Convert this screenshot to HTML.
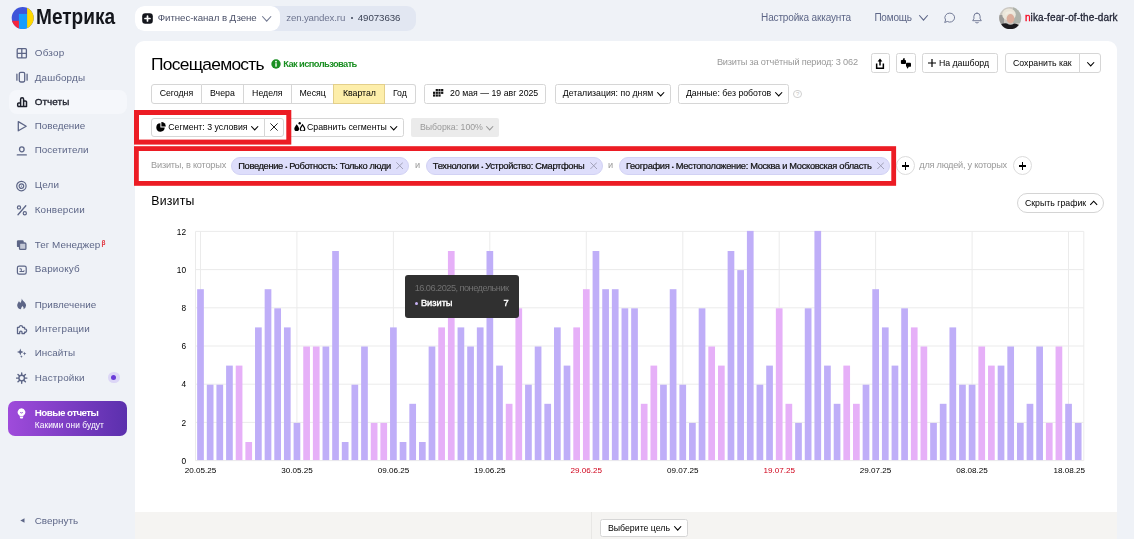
<!DOCTYPE html>
<html lang="ru"><head><meta charset="utf-8"><title>Метрика — Посещаемость</title>
<style>
*{box-sizing:border-box;margin:0;padding:0}
html,body{width:1134px;height:539px;overflow:hidden}
body{background:#eff2f7;font-family:"Liberation Sans",Arial,sans-serif;position:relative;color:#000;font-size:8.67px}
.abs{position:absolute}
.t{position:absolute;white-space:nowrap}
.d{font-size:6px;position:relative;top:-0.500px}
.btn{position:absolute;border:1px solid #d6d6d6;border-radius:2.500px;background:#fff}
.bt{position:absolute;white-space:nowrap;font-size:8.67px;line-height:9px;color:#000}
.seg{position:absolute;top:84px;height:19.500px;border:1px solid #d6d6d6;border-left:none;background:#fff;line-height:17.500px;font-size:8.67px;text-align:center}
.chip{position:absolute;top:157px;height:18px;border-radius:9px;background:#dedefb;border:1px solid #d2d2f4}
.plus{position:absolute;width:19px;height:19px;border-radius:50%;border:1px solid #dcdcdc;background:#fff}
.plus:before{content:"";position:absolute;left:4.700px;top:7.800px;width:7.600px;height:1.400px;background:#000}
.plus:after{content:"";position:absolute;left:7.800px;top:4.700px;width:1.400px;height:7.600px;background:#000}
</style></head><body>

<!-- logo -->
<svg class="abs" style="left:11px;top:6px" width="24" height="24" viewBox="0 0 24 24">
 <defs><clipPath id="lg"><circle cx="11.700" cy="12" r="11"/></clipPath></defs>
 <g clip-path="url(#lg)">
  <rect x="0" y="0" width="24" height="24" fill="#3f54d9"/>
  <rect x="0" y="14.800" width="8" height="10" fill="#f5263d"/>
  <rect x="7.900" y="7.900" width="8.300" height="17" fill="#179cfd"/>
  <rect x="16.100" y="0" width="8" height="24" fill="#ffd800"/>
 </g>
</svg>

<!-- counter selector -->
<div class="abs" style="left:135px;top:6px;width:281px;height:24.500px;border-radius:9px;background:#e2e7f2"></div>
<div class="abs" style="left:135px;top:6px;width:144.500px;height:24.500px;border-radius:9px;background:#fff"></div>
<svg class="abs" style="left:141.500px;top:12.500px" width="11" height="11" viewBox="0 0 11 11"><rect x="0.200" y="0.200" width="10.600" height="10.600" rx="3" fill="#14161c"/><path d="M5.500 3v5M3 5.500h5" stroke="#fff" stroke-width="1.700" stroke-linecap="round"/></svg>
<svg class="abs" style="left:262.4px;top:15.6px;overflow:visible" width="9.4" height="5.4" viewBox="0 0 9.4 5.4"><path d="M0.25 0.25L4.70 5.15L9.15 0.25" fill="none" stroke="#727991" stroke-width="1.1"/></svg>
<div class="abs" style="left:350.600px;top:17px;width:2px;height:2px;border-radius:50%;background:#3d4457"></div>

<svg class="abs" style="left:918.5px;top:15.3px;overflow:visible" width="9" height="5.3" viewBox="0 0 9 5.3"><path d="M0.25 0.25L4.50 5.05L8.75 0.25" fill="none" stroke="#5d6687" stroke-width="1.1"/></svg>
<svg class="abs" style="left:943px;top:12px" width="13" height="12" viewBox="0 0 13 12"><path d="M6.800 1.100a4.800 4.500 0 1 1-2.500 8.350L1.700 10.500L2.600 8A4.800 4.500 0 0 1 6.800 1.100Z" fill="none" stroke="#747c98" stroke-width="1" stroke-linejoin="round"/></svg>
<svg class="abs" style="left:970.500px;top:12px" width="12" height="12" viewBox="0 0 12 12"><path d="M6 1.100a3.100 3.100 0 0 1 3.100 3.100v2.500l1.200 2H1.700l1.200-2V4.200A3.100 3.100 0 0 1 6 1.100ZM4.700 10.600q1.300 1 2.600 0" fill="none" stroke="#747c98" stroke-width="1" stroke-linejoin="round" stroke-linecap="round"/></svg>
<svg class="abs" style="left:999px;top:7px" width="22.500" height="22.500" viewBox="0 0 22.500 22.500">
 <defs><clipPath id="av"><circle cx="11.200" cy="11.100" r="11"/></clipPath></defs>
 <g clip-path="url(#av)">
  <rect width="23" height="23" fill="#cbc8c2"/>
  <rect x="14" y="0" width="9" height="16" fill="#aeb3ab"/>
  <rect x="0" y="8" width="5" height="9" fill="#9a9a98"/>
  <ellipse cx="10" cy="7.500" rx="6.800" ry="6" fill="#ebe6da"/>
  <ellipse cx="11.500" cy="11.800" rx="3.900" ry="4.700" fill="#dcae9c"/>
  <path d="M6.500 9q2-4 8.500-2.500q-3-4-8.500-1Z" fill="#f1ede2"/>
  <path d="M0 23V18.500q4.500-3 8-2q3.500 2.500 7 0q4 0 8 3.500V23Z" fill="#1b1a1e"/>
 </g>
</svg>

<!-- sidebar -->
<svg class="abs" style="left:16px;top:47.2px" width="12" height="12" viewBox="0 0 12 12"><rect x="1.2" y="1.7" width="9.2" height="9.2" rx="1" fill="none" stroke="#5d6687" stroke-width="1.3"/><path d="M5.8 1.7v9.2M1.2 6.3h9.2" stroke="#5d6687" stroke-width="1.3"/></svg>
<svg class="abs" style="left:16px;top:71.3px" width="12" height="12" viewBox="0 0 12 12"><rect x="3.3" y="1.4" width="5.4" height="9.6" rx="1.4" fill="none" stroke="#5d6687" stroke-width="1.3"/><path d="M0.9 3.2v6M11.1 3.2v6" stroke="#5d6687" stroke-width="1.3" stroke-linecap="round"/></svg>
<div class="abs" style="left:8.500px;top:90px;width:118px;height:24px;border-radius:8px;background:#f5f7fb"></div>
<svg class="abs" style="left:16px;top:95.5px" width="12" height="12" viewBox="0 0 12 12"><path d="M1.7 10.6V8a1 1 0 0 1 1-1h1.9V3.2a1.5 1.5 0 0 1 3 0v7.4M7.6 5h1.800a1.1 1.1 0 0 1 1.1 1.1v4.500H1.7M4.600 7v3.600" fill="none" stroke="#1c1f2b" stroke-width="1.500" stroke-linejoin="round"/></svg>
<svg class="abs" style="left:16px;top:119.7px" width="12" height="12" viewBox="0 0 12 12"><path d="M2.300 1.600L10.200 6.200L2.300 10.800Z" fill="none" stroke="#5d6687" stroke-width="1.300" stroke-linejoin="round"/></svg>
<svg class="abs" style="left:16px;top:143.9px" width="12" height="12" viewBox="0 0 12 12"><ellipse cx="5.800" cy="5.300" rx="2.300" ry="2.500" fill="none" stroke="#5d6687" stroke-width="1.300"/><path d="M1.300 10.900h9" stroke="#5d6687" stroke-width="1.300" stroke-linecap="round"/></svg>
<svg class="abs" style="left:16px;top:179.6px" width="12" height="12" viewBox="0 0 12 12"><circle cx="5.400" cy="6.100" r="4.700" fill="none" stroke="#5d6687" stroke-width="1.200"/><circle cx="5.400" cy="6.100" r="2.300" fill="none" stroke="#5d6687" stroke-width="1.200"/><circle cx="5.400" cy="6.100" r="0.700" fill="#5d6687"/></svg>
<svg class="abs" style="left:16px;top:204.2px" width="12" height="12" viewBox="0 0 12 12"><path d="M9.800 1.800L2 10.700" stroke="#5d6687" stroke-width="1.300" stroke-linecap="round"/><circle cx="3" cy="3.400" r="1.600" fill="none" stroke="#5d6687" stroke-width="1.200"/><circle cx="8.800" cy="9.200" r="1.600" fill="none" stroke="#5d6687" stroke-width="1.200"/></svg>
<svg class="abs" style="left:16px;top:238.8px" width="12" height="12" viewBox="0 0 12 12"><rect x="0.900" y="1.300" width="6.800" height="6.800" rx="1.200" fill="#5d6687"/><rect x="3.500" y="4" width="6.400" height="6.400" rx="1" fill="#c3c8d6" stroke="#5d6687" stroke-width="1.300"/></svg>
<svg class="abs" style="left:16px;top:263.5px" width="12" height="12" viewBox="0 0 12 12"><rect x="1.400" y="2.100" width="8.800" height="8" rx="1.700" fill="none" stroke="#5d6687" stroke-width="1.200"/><path d="M3.500 4.800h1.800M5.300 4.800v2.700M3.500 7.500h4.500M8 6.300v1.200" stroke="#5d6687" stroke-width="1" fill="none"/></svg>
<svg class="abs" style="left:16px;top:298.4px" width="12" height="12" viewBox="0 0 12 12"><path d="M5.700 0.400c.6 2.400 4.400 3.700 4.400 7.100a4.400 4.400 0 0 1-2.700 3.700c.5-1.200.1-2.300-1.100-3.300c-.3 1.200-1.500 1.800-1.200 3.400A4.400 4.400 0 0 1 1.200 7.400c0-1.900 1.100-2.800 1.700-4.200c.6.500 1 1.100 1.200 1.800C5.100 3.800 5.900 2.300 5.700.4Z" fill="#5d6687"/></svg>
<svg class="abs" style="left:16px;top:323.1px" width="12" height="12" viewBox="0 0 12 12"><path d="M1.500 4.300h1.700a1.700 1.700 0 1 1 3.400 0h1.900v1.600a1.700 1.700 0 1 1 0 3.300v1.400H6V9.700a1.200 1.200 0 1 0-2.300 0v.9H1.500Z" fill="none" stroke="#5d6687" stroke-width="1.300" stroke-linejoin="round"/></svg>
<svg class="abs" style="left:16px;top:347.3px" width="12" height="12" viewBox="0 0 12 12"><path d="M4.300 1.600L5.200 4.100L7.700 5L5.200 5.900L4.300 8.400L3.400 5.900L.9 5L3.400 4.100Z" fill="#5d6687"/><path d="M8.600 4.800l.5 1.300l1.300.5l-1.300.5l-.5 1.300l-.5-1.300l-1.300-.5l1.300-.5zM5.400 8.200l.4 1l1 .4l-1 .4l-.4 1l-.4-1l-1-.4l1-.4z" fill="#5d6687"/></svg>
<svg class="abs" style="left:16px;top:371.8px" width="12" height="12" viewBox="0 0 12 12"><circle cx="5.700" cy="6.100" r="2.800" fill="none" stroke="#5d6687" stroke-width="1.400"/><path d="M5.700 0.900v2M5.700 9.300v2M0.500 6.100h2M8.900 6.100h2M2 2.400l1.400 1.400M8 8.400l1.400 1.400M2 9.800l1.400-1.400M8 3.800l1.400-1.400" stroke="#5d6687" stroke-width="1.400" stroke-linecap="round"/></svg>
<div class="abs" style="left:108.200px;top:371.900px;width:11.400px;height:11.400px;border-radius:50%;background:#dcd6f6"></div>
<div class="abs" style="left:111.400px;top:375.100px;width:5px;height:5px;border-radius:50%;background:#6a3bd8"></div>
<div class="abs" style="left:8.200px;top:400.600px;width:119px;height:35.500px;border-radius:7px;background:linear-gradient(90deg,#9f4bdb,#5b30ad)"></div>
<svg class="abs" style="left:17px;top:407.500px" width="9" height="11" viewBox="0 0 9 11"><path d="M4.500 0.300a3.900 3.900 0 0 1 2.300 7c-.4.300-.6.700-.6 1.100H2.800c0-.4-.2-.8-.6-1.100A3.900 3.900 0 0 1 4.500.3ZM2.900 9.100h3.200v.5a1 1 0 0 1-1 1H3.900a1 1 0 0 1-1-1Z" fill="#fff"/><path d="M3.300 4l1.200 1.300L5.700 4" fill="none" stroke="#8a44cc" stroke-width="0.900"/></svg>
<svg class="abs" style="left:19.500px;top:518.300px" width="5" height="5" viewBox="0 0 5 5"><path d="M4.500 0.200v4.600L0.300 2.500Z" fill="#5d6687"/></svg>

<!-- main panel -->
<div class="abs" style="left:135px;top:41px;width:982px;height:500px;background:#fff;border-radius:9px 9px 0 0"></div>
<div class="abs" style="left:135px;top:512px;width:982px;height:27px;background:#f5f4f2"></div>
<div class="abs" style="left:591px;top:512px;width:1px;height:27px;background:#e8e7e5"></div>

<svg class="abs" style="left:271px;top:58.700px" width="10" height="10" viewBox="0 0 10 10"><circle cx="5" cy="5" r="4.700" fill="#1a8f22"/><rect x="4.300" y="4.200" width="1.400" height="3.500" fill="#fff"/><circle cx="5" cy="2.700" r="0.900" fill="#fff"/></svg>

<!-- top-right buttons -->
<div class="btn" style="left:871px;top:53px;width:19px;height:20px"></div>
<svg class="abs" style="left:875px;top:57.500px" width="10" height="12" viewBox="0 0 10 12"><path d="M5 0.400L7.400 3.500H5.750V7.600H4.250V3.500H2.600Z" fill="#000"/><path d="M1.650 5.600v4.750h6.700V5.600" fill="none" stroke="#000" stroke-width="1.500"/></svg>
<div class="btn" style="left:896px;top:53px;width:19.500px;height:20px"></div>
<svg class="abs" style="left:900px;top:57px" width="12" height="12.500" viewBox="0 0 12 12.500"><rect x="0.900" y="2.900" width="5.100" height="4.100" rx="0.900" fill="#000"/><path d="M2.500 3.400L3.600 0.900L4.700 1.300L4.700 3.400Z" fill="#000"/><rect x="6" y="5.800" width="5" height="4" rx="0.900" fill="#000"/><path d="M7 9.300L6.800 10.800L7.600 11.700L9 9.300Z" fill="#000"/></svg>
<div class="btn" style="left:922px;top:53px;width:76px;height:20px"></div>
<svg class="abs" style="left:927.800px;top:59.200px" width="8" height="8" viewBox="0 0 8 8"><path d="M4 0v8M0 4h8" stroke="#000" stroke-width="1.200"/></svg>
<div class="btn" style="left:1005px;top:53px;width:75px;height:20px;border-radius:3px 0 0 3px"></div>
<div class="btn" style="left:1079px;top:53px;width:21.600px;height:20px;border-radius:0 3px 3px 0"></div>
<svg class="abs" style="left:1086.7px;top:61.5px;overflow:visible" width="7.4" height="4.2" viewBox="0 0 7.4 4.2"><path d="M0.25 0.25L3.70 3.95L7.15 0.25" fill="none" stroke="#000" stroke-width="1.1"/></svg>

<!-- period row -->
<div class="seg" style="left:151px;width:51px;border-left:1px solid #d6d6d6;border-radius:3px 0 0 3px"></div>
<div class="seg" style="left:202px;width:42px"></div>
<div class="seg" style="left:244px;width:47.600px"></div>
<div class="seg" style="left:291.600px;width:42.600px"></div>
<div class="seg" style="left:334.200px;width:50.500px;background:#fdeeaa;border-color:#e3cf8a;box-shadow:-1px 0 0 #e3cf8a"></div>
<div class="seg" style="left:384.700px;width:31px;border-radius:0 3px 3px 0"></div>

<div class="btn" style="left:424.400px;top:84px;width:121.800px;height:19.500px"></div>
<svg class="abs" style="left:433.200px;top:89px" width="10.400" height="7.700" viewBox="0 0 10.400 7.700"><g fill="#111"><rect x="2.7" y="0.0" width="2.2" height="2.2"/><rect x="5.4" y="0.0" width="2.2" height="2.2"/><rect x="8.1" y="0.0" width="2.2" height="2.2"/><rect x="0.0" y="2.7" width="2.2" height="2.2"/><rect x="2.7" y="2.7" width="2.2" height="2.2"/><rect x="5.4" y="2.7" width="2.2" height="2.2"/><rect x="8.1" y="2.7" width="2.2" height="2.2"/><rect x="0.0" y="5.4" width="2.2" height="2.2"/><rect x="2.7" y="5.4" width="2.2" height="2.2"/><rect x="5.4" y="5.4" width="2.2" height="2.2"/></g></svg>
<div class="btn" style="left:555px;top:84px;width:116px;height:19.500px"></div>
<svg class="abs" style="left:657.2px;top:91.6px;overflow:visible" width="7.4" height="4.2" viewBox="0 0 7.4 4.2"><path d="M0.25 0.25L3.70 3.95L7.15 0.25" fill="none" stroke="#000" stroke-width="1.1"/></svg>
<div class="btn" style="left:678px;top:84px;width:111.400px;height:19.500px"></div>
<svg class="abs" style="left:775.2px;top:91.6px;overflow:visible" width="7.4" height="4.2" viewBox="0 0 7.4 4.2"><path d="M0.25 0.25L3.70 3.95L7.15 0.25" fill="none" stroke="#000" stroke-width="1.1"/></svg>
<div class="abs" style="left:793.400px;top:89.500px;width:8.400px;height:8.400px;border-radius:50%;border:1px solid #d0d0d0"></div>
<div class="t" style="left:796px;top:91px;font-size:6px;line-height:6px;color:#c4c4c4">?</div>

<!-- segment row -->
<div class="btn" style="left:151px;top:118px;width:114px;height:18.800px;border-radius:3px 0 0 3px"></div>
<svg class="abs" style="left:155.800px;top:122px" width="10" height="10" viewBox="0 0 10 10"><path d="M4.400 1.300A4.200 4.200 0 1 0 8.700 5.600H4.400Z" fill="#000"/><path d="M5.400 0.100A4.300 4.300 0 0 1 9.800 4.500H5.400Z" fill="#000"/></svg>
<svg class="abs" style="left:250.6px;top:125.5px;overflow:visible" width="7.4" height="4.2" viewBox="0 0 7.4 4.2"><path d="M0.25 0.25L3.70 3.95L7.15 0.25" fill="none" stroke="#000" stroke-width="1.1"/></svg>
<div class="btn" style="left:264px;top:118px;width:20px;height:18.800px;border-radius:0 3px 3px 0"></div>
<svg class="abs" style="left:270px;top:123.2px" width="8" height="8" viewBox="0 0 8 8"><path d="M0.4 0.400L7.6 7.6M7.6 0.400L0.400 7.6" stroke="#222" stroke-width="1.0"/></svg>
<div class="btn" style="left:288px;top:118px;width:116px;height:18.800px"></div>
<svg class="abs" style="left:294.300px;top:121.800px" width="11.500" height="9.500" viewBox="0 0 11.500 9.500"><path d="M2.700 2.200C3.900 4 5.100 5.200 5.100 6.800a2.400 2.400 0 0 1-4.800 0C.3 5.200 1.500 4 2.700 2.200Z" fill="#000"/><path d="M8.500 2.900c1.100 1.700 2.200 2.700 2.200 4.100a2.200 2.200 0 0 1-4.400 0c0-1.400 1.100-2.400 2.200-4.100Z" fill="#fff" stroke="#000" stroke-width="1.200"/><circle cx="5.700" cy="1.300" r="1.200" fill="#000"/></svg>
<svg class="abs" style="left:390.2px;top:125.5px;overflow:visible" width="7.4" height="4.2" viewBox="0 0 7.4 4.2"><path d="M0.25 0.25L3.70 3.95L7.15 0.25" fill="none" stroke="#000" stroke-width="1.1"/></svg>
<div class="abs" style="left:411px;top:118px;width:88px;height:18.800px;background:#ebebeb;border-radius:2px"></div>
<svg class="abs" style="left:485.8px;top:125.5px;overflow:visible" width="7.4" height="4.2" viewBox="0 0 7.4 4.2"><path d="M0.25 0.25L3.70 3.95L7.15 0.25" fill="none" stroke="#999" stroke-width="1.1"/></svg>

<!-- chips -->
<div class="chip" style="left:231px;width:178.200px"></div>
<svg class="abs" style="left:396px;top:162.3px" width="7.4" height="7.4" viewBox="0 0 7.4 7.4"><path d="M0.4 0.400L7.0 7.0M7.0 0.400L0.400 7.0" stroke="#9a9ab0" stroke-width="0.9"/></svg>
<div class="chip" style="left:425.700px;width:177px"></div>
<svg class="abs" style="left:589.6px;top:162.3px" width="7.4" height="7.4" viewBox="0 0 7.4 7.4"><path d="M0.4 0.400L7.0 7.0M7.0 0.400L0.400 7.0" stroke="#9a9ab0" stroke-width="0.9"/></svg>
<div class="chip" style="left:619.200px;width:270.600px"></div>
<svg class="abs" style="left:877px;top:162.3px" width="7.4" height="7.4" viewBox="0 0 7.4 7.4"><path d="M0.4 0.400L7.0 7.0M7.0 0.400L0.400 7.0" stroke="#9a9ab0" stroke-width="0.9"/></svg>
<div class="plus" style="left:896.100px;top:156.400px"></div>
<div class="plus" style="left:1013.200px;top:156.400px"></div>

<!-- red boxes -->
<svg class="abs" style="left:0;top:0" width="1134" height="200" viewBox="0 0 1134 200"><rect x="136.500" y="112.500" width="152.300" height="29.600" fill="none" stroke="#ec1c24" stroke-width="5"/><rect x="136.400" y="148.600" width="757.300" height="34.800" fill="none" stroke="#ec1c24" stroke-width="4.800"/></svg>

<div class="abs" style="left:1017px;top:193px;width:86.800px;height:19.800px;border:1px solid #d4d4d4;border-radius:10px;background:#fff"></div>
<svg class="abs" style="left:1089.8px;top:200.9px;overflow:visible" width="7.4" height="4.2" viewBox="0 0 7.4 4.2"><path d="M0.25 3.95L3.70 0.25L7.15 3.95" fill="none" stroke="#000" stroke-width="1.1"/></svg>

<svg class="abs" style="left:0;top:0;will-change:transform" width="1134" height="539" viewBox="0 0 1134 539" font-family="Liberation Sans, Arial, sans-serif">
<line x1="195.5" x2="1083.8" y1="460.6" y2="460.6" stroke="#ebebeb" stroke-width="1"/>
<line x1="195.5" x2="1083.8" y1="422.40000000000003" y2="422.40000000000003" stroke="#ebebeb" stroke-width="1"/>
<line x1="195.5" x2="1083.8" y1="384.20000000000005" y2="384.20000000000005" stroke="#ebebeb" stroke-width="1"/>
<line x1="195.5" x2="1083.8" y1="346.0" y2="346.0" stroke="#ebebeb" stroke-width="1"/>
<line x1="195.5" x2="1083.8" y1="307.8" y2="307.8" stroke="#ebebeb" stroke-width="1"/>
<line x1="195.5" x2="1083.8" y1="269.6" y2="269.6" stroke="#ebebeb" stroke-width="1"/>
<line x1="195.5" x2="1083.8" y1="231.4" y2="231.4" stroke="#ebebeb" stroke-width="1"/>
<line x1="195.5" x2="195.5" y1="231.4" y2="460.6" stroke="#ebebeb" stroke-width="1"/>
<line x1="1083.8" x2="1083.8" y1="231.4" y2="460.6" stroke="#ebebeb" stroke-width="1"/>
<line x1="200.5" x2="200.5" y1="231.4" y2="460.6" stroke="#ebebeb" stroke-width="1"/>
<line x1="296.9" x2="296.9" y1="231.4" y2="460.6" stroke="#ebebeb" stroke-width="1"/>
<line x1="393.4" x2="393.4" y1="231.4" y2="460.6" stroke="#ebebeb" stroke-width="1"/>
<line x1="489.8" x2="489.8" y1="231.4" y2="460.6" stroke="#ebebeb" stroke-width="1"/>
<line x1="586.3" x2="586.3" y1="231.4" y2="460.6" stroke="#ebebeb" stroke-width="1"/>
<line x1="682.8" x2="682.8" y1="231.4" y2="460.6" stroke="#ebebeb" stroke-width="1"/>
<line x1="779.2" x2="779.2" y1="231.4" y2="460.6" stroke="#ebebeb" stroke-width="1"/>
<line x1="875.6" x2="875.6" y1="231.4" y2="460.6" stroke="#ebebeb" stroke-width="1"/>
<line x1="972.1" x2="972.1" y1="231.4" y2="460.6" stroke="#ebebeb" stroke-width="1"/>
<line x1="1068.5" x2="1068.5" y1="231.4" y2="460.6" stroke="#ebebeb" stroke-width="1"/>
<rect x="197.15" y="289.20" width="6.7" height="170.90" fill="#bfaef8"/>
<rect x="206.80" y="384.70" width="6.7" height="75.40" fill="#bfaef8"/>
<rect x="216.44" y="384.70" width="6.7" height="75.40" fill="#bfaef8"/>
<rect x="226.09" y="365.60" width="6.7" height="94.50" fill="#bfaef8"/>
<rect x="235.73" y="365.60" width="6.7" height="94.50" fill="#e6b0f8"/>
<rect x="245.38" y="442.00" width="6.7" height="18.10" fill="#e6b0f8"/>
<rect x="255.02" y="327.40" width="6.7" height="132.70" fill="#bfaef8"/>
<rect x="264.66" y="289.20" width="6.7" height="170.90" fill="#bfaef8"/>
<rect x="274.31" y="308.30" width="6.7" height="151.80" fill="#bfaef8"/>
<rect x="283.95" y="327.40" width="6.7" height="132.70" fill="#bfaef8"/>
<rect x="293.60" y="422.90" width="6.7" height="37.20" fill="#bfaef8"/>
<rect x="303.25" y="346.50" width="6.7" height="113.60" fill="#e6b0f8"/>
<rect x="312.89" y="346.50" width="6.7" height="113.60" fill="#e6b0f8"/>
<rect x="322.53" y="346.50" width="6.7" height="113.60" fill="#bfaef8"/>
<rect x="332.18" y="251.00" width="6.7" height="209.10" fill="#bfaef8"/>
<rect x="341.82" y="442.00" width="6.7" height="18.10" fill="#bfaef8"/>
<rect x="351.47" y="384.70" width="6.7" height="75.40" fill="#bfaef8"/>
<rect x="361.12" y="346.50" width="6.7" height="113.60" fill="#bfaef8"/>
<rect x="370.76" y="422.90" width="6.7" height="37.20" fill="#e6b0f8"/>
<rect x="380.40" y="422.90" width="6.7" height="37.20" fill="#e6b0f8"/>
<rect x="390.05" y="327.40" width="6.7" height="132.70" fill="#bfaef8"/>
<rect x="399.69" y="442.00" width="6.7" height="18.10" fill="#bfaef8"/>
<rect x="409.34" y="403.80" width="6.7" height="56.30" fill="#bfaef8"/>
<rect x="418.98" y="442.00" width="6.7" height="18.10" fill="#bfaef8"/>
<rect x="428.63" y="346.50" width="6.7" height="113.60" fill="#bfaef8"/>
<rect x="438.27" y="327.40" width="6.7" height="132.70" fill="#e6b0f8"/>
<rect x="447.92" y="251.00" width="6.7" height="209.10" fill="#e6b0f8"/>
<rect x="457.56" y="327.40" width="6.7" height="132.70" fill="#bfaef8"/>
<rect x="467.21" y="346.50" width="6.7" height="113.60" fill="#bfaef8"/>
<rect x="476.85" y="327.40" width="6.7" height="132.70" fill="#bfaef8"/>
<rect x="486.50" y="251.00" width="6.7" height="209.10" fill="#bfaef8"/>
<rect x="496.14" y="365.60" width="6.7" height="94.50" fill="#bfaef8"/>
<rect x="505.79" y="403.80" width="6.7" height="56.30" fill="#e6b0f8"/>
<rect x="515.43" y="308.30" width="6.7" height="151.80" fill="#e6b0f8"/>
<rect x="525.08" y="384.70" width="6.7" height="75.40" fill="#bfaef8"/>
<rect x="534.73" y="346.50" width="6.7" height="113.60" fill="#bfaef8"/>
<rect x="544.37" y="403.80" width="6.7" height="56.30" fill="#bfaef8"/>
<rect x="554.01" y="327.40" width="6.7" height="132.70" fill="#bfaef8"/>
<rect x="563.66" y="365.60" width="6.7" height="94.50" fill="#bfaef8"/>
<rect x="573.30" y="327.40" width="6.7" height="132.70" fill="#e6b0f8"/>
<rect x="582.95" y="289.20" width="6.7" height="170.90" fill="#e6b0f8"/>
<rect x="592.59" y="251.00" width="6.7" height="209.10" fill="#bfaef8"/>
<rect x="602.24" y="289.20" width="6.7" height="170.90" fill="#bfaef8"/>
<rect x="611.88" y="289.20" width="6.7" height="170.90" fill="#bfaef8"/>
<rect x="621.53" y="308.30" width="6.7" height="151.80" fill="#bfaef8"/>
<rect x="631.17" y="308.30" width="6.7" height="151.80" fill="#bfaef8"/>
<rect x="640.82" y="403.80" width="6.7" height="56.30" fill="#e6b0f8"/>
<rect x="650.47" y="365.60" width="6.7" height="94.50" fill="#e6b0f8"/>
<rect x="660.11" y="384.70" width="6.7" height="75.40" fill="#bfaef8"/>
<rect x="669.75" y="289.20" width="6.7" height="170.90" fill="#bfaef8"/>
<rect x="679.40" y="384.70" width="6.7" height="75.40" fill="#bfaef8"/>
<rect x="689.04" y="422.90" width="6.7" height="37.20" fill="#bfaef8"/>
<rect x="698.69" y="308.30" width="6.7" height="151.80" fill="#bfaef8"/>
<rect x="708.33" y="346.50" width="6.7" height="113.60" fill="#e6b0f8"/>
<rect x="717.98" y="365.60" width="6.7" height="94.50" fill="#e6b0f8"/>
<rect x="727.62" y="251.00" width="6.7" height="209.10" fill="#bfaef8"/>
<rect x="737.27" y="270.10" width="6.7" height="190.00" fill="#bfaef8"/>
<rect x="746.91" y="230.90" width="6.7" height="229.20" fill="#bfaef8"/>
<rect x="756.56" y="384.70" width="6.7" height="75.40" fill="#bfaef8"/>
<rect x="766.20" y="365.60" width="6.7" height="94.50" fill="#bfaef8"/>
<rect x="775.85" y="308.30" width="6.7" height="151.80" fill="#e6b0f8"/>
<rect x="785.50" y="403.80" width="6.7" height="56.30" fill="#e6b0f8"/>
<rect x="795.14" y="422.90" width="6.7" height="37.20" fill="#bfaef8"/>
<rect x="804.78" y="308.30" width="6.7" height="151.80" fill="#bfaef8"/>
<rect x="814.43" y="230.90" width="6.7" height="229.20" fill="#bfaef8"/>
<rect x="824.07" y="365.60" width="6.7" height="94.50" fill="#bfaef8"/>
<rect x="833.72" y="403.80" width="6.7" height="56.30" fill="#bfaef8"/>
<rect x="843.36" y="365.60" width="6.7" height="94.50" fill="#e6b0f8"/>
<rect x="853.01" y="403.80" width="6.7" height="56.30" fill="#e6b0f8"/>
<rect x="862.65" y="384.70" width="6.7" height="75.40" fill="#bfaef8"/>
<rect x="872.30" y="289.20" width="6.7" height="170.90" fill="#bfaef8"/>
<rect x="881.94" y="327.40" width="6.7" height="132.70" fill="#bfaef8"/>
<rect x="891.59" y="365.60" width="6.7" height="94.50" fill="#bfaef8"/>
<rect x="901.23" y="308.30" width="6.7" height="151.80" fill="#bfaef8"/>
<rect x="910.88" y="327.40" width="6.7" height="132.70" fill="#e6b0f8"/>
<rect x="920.52" y="346.50" width="6.7" height="113.60" fill="#e6b0f8"/>
<rect x="930.17" y="422.90" width="6.7" height="37.20" fill="#bfaef8"/>
<rect x="939.81" y="403.80" width="6.7" height="56.30" fill="#bfaef8"/>
<rect x="949.46" y="327.40" width="6.7" height="132.70" fill="#bfaef8"/>
<rect x="959.10" y="384.70" width="6.7" height="75.40" fill="#bfaef8"/>
<rect x="968.75" y="384.70" width="6.7" height="75.40" fill="#bfaef8"/>
<rect x="978.39" y="346.50" width="6.7" height="113.60" fill="#e6b0f8"/>
<rect x="988.04" y="365.60" width="6.7" height="94.50" fill="#e6b0f8"/>
<rect x="997.68" y="365.60" width="6.7" height="94.50" fill="#bfaef8"/>
<rect x="1007.33" y="346.50" width="6.7" height="113.60" fill="#bfaef8"/>
<rect x="1016.97" y="422.90" width="6.7" height="37.20" fill="#bfaef8"/>
<rect x="1026.62" y="403.80" width="6.7" height="56.30" fill="#bfaef8"/>
<rect x="1036.27" y="346.50" width="6.7" height="113.60" fill="#bfaef8"/>
<rect x="1045.91" y="422.90" width="6.7" height="37.20" fill="#e6b0f8"/>
<rect x="1055.56" y="346.50" width="6.7" height="113.60" fill="#e6b0f8"/>
<rect x="1065.20" y="403.80" width="6.7" height="56.30" fill="#bfaef8"/>
<rect x="1074.85" y="422.90" width="6.7" height="37.20" fill="#bfaef8"/>
<text x="186" y="463.7" font-size="8.3" text-anchor="end" fill="#000">0</text>
<text x="186" y="425.5" font-size="8.3" text-anchor="end" fill="#000">2</text>
<text x="186" y="387.3" font-size="8.3" text-anchor="end" fill="#000">4</text>
<text x="186" y="349.1" font-size="8.3" text-anchor="end" fill="#000">6</text>
<text x="186" y="310.9" font-size="8.3" text-anchor="end" fill="#000">8</text>
<text x="186" y="272.7" font-size="8.3" text-anchor="end" fill="#000">10</text>
<text x="186" y="234.5" font-size="8.3" text-anchor="end" fill="#000">12</text>
<text x="200.5" y="472.6" font-size="8.1" text-anchor="middle" fill="#000">20.05.25</text>
<text x="296.9" y="472.6" font-size="8.1" text-anchor="middle" fill="#000">30.05.25</text>
<text x="393.4" y="472.6" font-size="8.1" text-anchor="middle" fill="#000">09.06.25</text>
<text x="489.8" y="472.6" font-size="8.1" text-anchor="middle" fill="#000">19.06.25</text>
<text x="586.3" y="472.6" font-size="8.1" text-anchor="middle" fill="#d0021b">29.06.25</text>
<text x="682.8" y="472.6" font-size="8.1" text-anchor="middle" fill="#000">09.07.25</text>
<text x="779.2" y="472.6" font-size="8.1" text-anchor="middle" fill="#d0021b">19.07.25</text>
<text x="875.6" y="472.6" font-size="8.1" text-anchor="middle" fill="#000">29.07.25</text>
<text x="972.1" y="472.6" font-size="8.1" text-anchor="middle" fill="#000">08.08.25</text>
<text x="1085" y="472.6" font-size="8.1" text-anchor="end" fill="#000">18.08.25</text>
</svg>

<!-- tooltip -->
<div class="abs" style="left:405px;top:275px;width:113.700px;height:42.800px;border-radius:3px;background:#303030"></div>
<div class="abs" style="left:414.600px;top:302px;width:3.200px;height:3.200px;border-radius:50%;background:#c9b3f5"></div>

<div class="btn" style="left:599.700px;top:519.200px;width:88px;height:18px"></div>
<svg class="abs" style="left:673.8px;top:526.4px;overflow:visible" width="7.4" height="4.4" viewBox="0 0 7.4 4.4"><path d="M0.25 0.25L3.70 4.15L7.15 0.25" fill="none" stroke="#000" stroke-width="1.1"/></svg>

<div class="abs" style="left:0;top:0;width:1134px;height:539px;will-change:transform">
<div class="t" style="left:35.90px;top:6.00px;font-size:21.6px;line-height:21.6px;color:#14161c;font-weight:bold;letter-spacing:0.000px;transform:scaleX(0.8841);transform-origin:0 0;">Метрика</div>
<div class="t" style="left:157.82px;top:13.00px;font-size:9.7px;line-height:9.7px;color:#4a5068;font-weight:normal;letter-spacing:-0.066px;">Фитнес-канал в Дзене</div>
<div class="t" style="left:286.22px;top:13.00px;font-size:9.7px;line-height:9.7px;color:#6e7590;font-weight:normal;letter-spacing:-0.150px;">zen.yandex.ru</div>
<div class="t" style="left:357.72px;top:13.00px;font-size:9.7px;line-height:9.7px;color:#3d4457;font-weight:normal;letter-spacing:-0.049px;">49073636</div>
<div class="t" style="left:761.10px;top:13.00px;font-size:10px;line-height:10px;color:#5d6687;font-weight:normal;letter-spacing:-0.150px;">Настройка аккаунта</div>
<div class="t" style="left:874.40px;top:13.00px;font-size:10px;line-height:10px;color:#5d6687;font-weight:normal;letter-spacing:-0.205px;">Помощь</div>
<div class="t" style="left:1024.90px;top:13.00px;font-size:10px;line-height:10px;color:#1f2233;font-weight:normal;letter-spacing:0.105px;-webkit-text-stroke:0.3px #1f2233;"><span style="color:#f5001d;-webkit-text-stroke:0.3px #f5001d">n</span>ika-fear-of-the-dark</div>
<div class="t" style="left:34.71px;top:48.00px;font-size:9.9px;line-height:9.9px;color:#5d6687;font-weight:normal;letter-spacing:0.264px;">Обзор</div>
<div class="t" style="left:34.71px;top:73.00px;font-size:9.9px;line-height:9.9px;color:#5d6687;font-weight:normal;letter-spacing:0.130px;">Дашборды</div>
<div class="t" style="left:34.71px;top:97.00px;font-size:9.9px;line-height:9.9px;color:#1c1f2b;font-weight:normal;letter-spacing:0.089px;-webkit-text-stroke:0.35px #1c1f2b;">Отчеты</div>
<div class="t" style="left:34.71px;top:121.00px;font-size:9.9px;line-height:9.9px;color:#5d6687;font-weight:normal;letter-spacing:-0.016px;">Поведение</div>
<div class="t" style="left:34.71px;top:145.00px;font-size:9.9px;line-height:9.9px;color:#5d6687;font-weight:normal;letter-spacing:0.022px;">Посетители</div>
<div class="t" style="left:34.71px;top:180.00px;font-size:9.9px;line-height:9.9px;color:#5d6687;font-weight:normal;letter-spacing:0.179px;">Цели</div>
<div class="t" style="left:34.71px;top:205.00px;font-size:9.9px;line-height:9.9px;color:#5d6687;font-weight:normal;letter-spacing:0.149px;">Конверсии</div>
<div class="t" style="left:34.71px;top:240.00px;font-size:9.9px;line-height:9.9px;color:#5d6687;font-weight:normal;letter-spacing:0.023px;">Тег Менеджер</div>
<div class="t" style="left:34.71px;top:264.00px;font-size:9.9px;line-height:9.9px;color:#5d6687;font-weight:normal;letter-spacing:0.181px;">Вариокуб</div>
<div class="t" style="left:34.71px;top:300.00px;font-size:9.9px;line-height:9.9px;color:#5d6687;font-weight:normal;letter-spacing:0.033px;">Привлечение</div>
<div class="t" style="left:34.71px;top:324.00px;font-size:9.9px;line-height:9.9px;color:#5d6687;font-weight:normal;letter-spacing:0.150px;">Интеграции</div>
<div class="t" style="left:34.71px;top:348.00px;font-size:9.9px;line-height:9.9px;color:#5d6687;font-weight:normal;letter-spacing:0.027px;">Инсайты</div>
<div class="t" style="left:34.71px;top:373.00px;font-size:9.9px;line-height:9.9px;color:#5d6687;font-weight:normal;letter-spacing:0.171px;">Настройки</div>
<div class="t" style="left:34.71px;top:516.00px;font-size:9.9px;line-height:9.9px;color:#5d6687;font-weight:normal;letter-spacing:0.025px;">Свернуть</div>
<div class="t" style="left:101.51px;top:240.00px;font-size:6.5px;line-height:6.5px;color:#e0323c;font-weight:bold;letter-spacing:0.000px;">β</div>
<div class="t" style="left:34.71px;top:408.00px;font-size:9.8px;line-height:9.8px;color:#fff;font-weight:bold;letter-spacing:-0.552px;">Новые отчеты</div>
<div class="t" style="left:34.80px;top:421.00px;font-size:8.4px;line-height:8.4px;color:#fff;font-weight:normal;letter-spacing:0.049px;">Какими они будут</div>
<div class="t" style="left:150.96px;top:56.00px;font-size:17.4px;line-height:17.4px;color:#000;font-weight:normal;letter-spacing:-0.714px;">Посещаемость</div>
<div class="t" style="left:283.24px;top:60.00px;font-size:9.3px;line-height:9.3px;color:#1a8f22;font-weight:bold;letter-spacing:-0.584px;">Как использовать</div>
<div class="t" style="left:716.95px;top:58.00px;font-size:9.2px;line-height:9.2px;color:#999;font-weight:normal;letter-spacing:-0.194px;">Визиты за отчётный период: 3 062</div>
<div class="t" style="left:151.05px;top:161.00px;font-size:9.2px;line-height:9.2px;color:#999;font-weight:normal;letter-spacing:-0.207px;">Визиты, в которых</div>
<div class="t" style="left:414.95px;top:161.00px;font-size:9.2px;line-height:9.2px;color:#999;font-weight:normal;letter-spacing:0.000px;">и</div>
<div class="t" style="left:607.95px;top:161.00px;font-size:9.2px;line-height:9.2px;color:#999;font-weight:normal;letter-spacing:0.000px;">и</div>
<div class="t" style="left:919.35px;top:161.00px;font-size:9.2px;line-height:9.2px;color:#999;font-weight:normal;letter-spacing:-0.259px;">для людей, у которых</div>
<div class="t" style="left:238.24px;top:162.00px;font-size:9.3px;line-height:9.3px;color:#111;font-weight:normal;letter-spacing:-0.342px;-webkit-text-stroke:0.22px #111;">Поведение <span class="d">•</span> Роботность: Только люди</div>
<div class="t" style="left:432.84px;top:162.00px;font-size:9.3px;line-height:9.3px;color:#111;font-weight:normal;letter-spacing:-0.324px;-webkit-text-stroke:0.22px #111;">Технологии <span class="d">•</span> Устройство: Смартфоны</div>
<div class="t" style="left:625.94px;top:162.00px;font-size:9.3px;line-height:9.3px;color:#111;font-weight:normal;letter-spacing:-0.324px;-webkit-text-stroke:0.22px #111;">География <span class="d">•</span> Местоположение: Москва и Московская область</div>
<div class="t" style="left:151.26px;top:195.00px;font-size:12.3px;line-height:12.3px;color:#000;font-weight:normal;letter-spacing:0.203px;">Визиты</div>
<div class="t" style="left:414.65px;top:284.00px;font-size:9.2px;line-height:9.2px;color:#707070;font-weight:normal;letter-spacing:-0.514px;">16.06.2025, понедельник</div>
<div class="t" style="left:420.94px;top:299.00px;font-size:9.3px;line-height:9.3px;color:#fff;font-weight:normal;letter-spacing:-0.036px;-webkit-text-stroke:0.4px #fff;">Визиты</div>
<div class="t" style="left:503.54px;top:299.00px;font-size:9.3px;line-height:9.3px;color:#fff;font-weight:normal;letter-spacing:0.000px;-webkit-text-stroke:0.4px #fff;">7</div>
<div class="t" style="left:938.88px;top:59.00px;font-size:8.75px;line-height:8.75px;color:#000;font-weight:normal;letter-spacing:0.000px;">На дашборд</div>
<div class="t" style="left:1012.98px;top:59.00px;font-size:8.75px;line-height:8.75px;color:#000;font-weight:normal;letter-spacing:0.000px;">Сохранить как</div>
<div class="t" style="left:450.08px;top:89.00px;font-size:8.75px;line-height:8.75px;color:#000;font-weight:normal;letter-spacing:0.000px;">20 мая — 19 авг 2025</div>
<div class="t" style="left:562.77px;top:89.00px;font-size:8.75px;line-height:8.75px;color:#000;font-weight:normal;letter-spacing:0.000px;">Детализация: по дням</div>
<div class="t" style="left:685.88px;top:89.00px;font-size:8.75px;line-height:8.75px;color:#000;font-weight:normal;letter-spacing:0.000px;">Данные: без роботов</div>
<div class="t" style="left:168.28px;top:123.00px;font-size:8.75px;line-height:8.75px;color:#000;font-weight:normal;letter-spacing:0.000px;">Сегмент: 3 условия</div>
<div class="t" style="left:306.98px;top:123.00px;font-size:8.75px;line-height:8.75px;color:#000;font-weight:normal;letter-spacing:0.000px;">Сравнить сегменты</div>
<div class="t" style="left:1024.97px;top:199.00px;font-size:8.75px;line-height:8.75px;color:#000;font-weight:normal;letter-spacing:0.000px;">Скрыть график</div>
<div class="t" style="left:607.98px;top:524.00px;font-size:8.75px;line-height:8.75px;color:#000;font-weight:normal;letter-spacing:0.000px;">Выберите цель</div>
<div class="t" style="left:159.67px;top:89.00px;font-size:8.75px;line-height:8.75px;color:#000;font-weight:normal;letter-spacing:0.000px;">Сегодня</div>
<div class="t" style="left:210.07px;top:89.00px;font-size:8.75px;line-height:8.75px;color:#000;font-weight:normal;letter-spacing:0.000px;">Вчера</div>
<div class="t" style="left:252.07px;top:89.00px;font-size:8.75px;line-height:8.75px;color:#000;font-weight:normal;letter-spacing:0.000px;">Неделя</div>
<div class="t" style="left:299.38px;top:89.00px;font-size:8.75px;line-height:8.75px;color:#000;font-weight:normal;letter-spacing:0.000px;">Месяц</div>
<div class="t" style="left:342.88px;top:89.00px;font-size:8.75px;line-height:8.75px;color:#000;font-weight:normal;letter-spacing:0.000px;">Квартал</div>
<div class="t" style="left:392.98px;top:89.00px;font-size:8.75px;line-height:8.75px;color:#000;font-weight:normal;letter-spacing:0.000px;">Год</div>
<div class="t" style="left:419.92px;top:123.00px;font-size:8.75px;line-height:8.75px;color:#999;font-weight:normal;letter-spacing:0.000px;">Выборка: 100%</div>
</div>
</body></html>
